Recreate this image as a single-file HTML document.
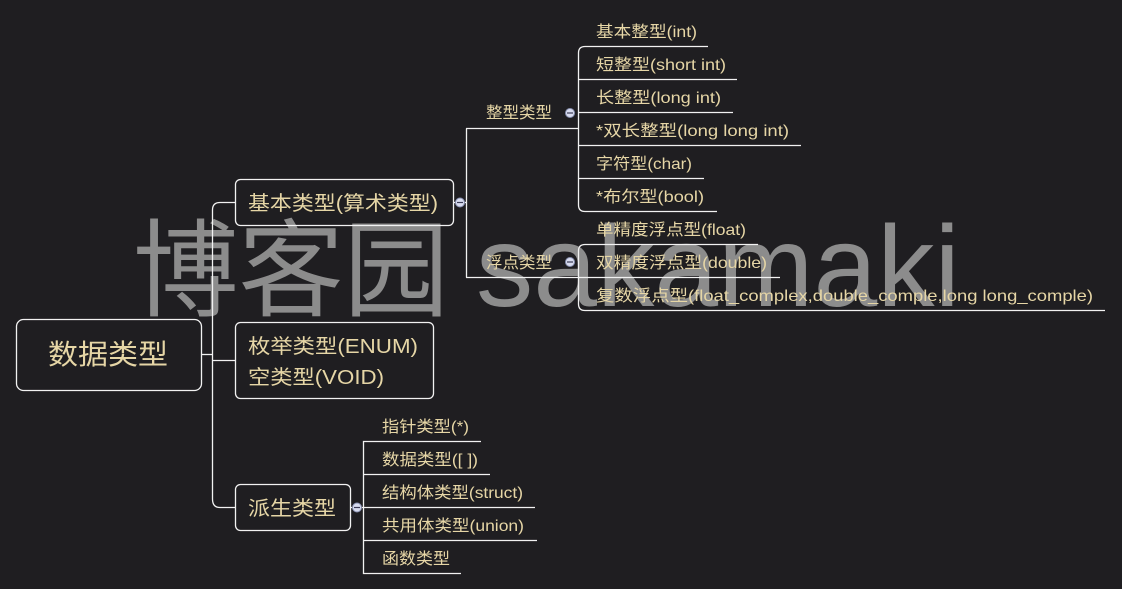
<!DOCTYPE html>
<html><head><meta charset="utf-8"><style>
html,body{margin:0;padding:0;background:#1f1e21;}
svg{display:block}
text{font-family:"Liberation Sans","Noto Sans CJK SC",sans-serif;}
</style></head><body>
<svg width="1122" height="589" viewBox="0 0 1122 589" xmlns="http://www.w3.org/2000/svg">
<rect width="1122" height="589" fill="#1f1e21"/>
<text x="133" y="308" font-size="106" fill="#8c8c8c" textLength="316" lengthAdjust="spacingAndGlyphs">博客园</text>
<text x="476" y="306" font-size="115" fill="#8c8c8c" textLength="484" lengthAdjust="spacingAndGlyphs">sakamaki</text>
<g fill="none" stroke="#f2f2f2" stroke-width="1.3">
<rect x="16.5" y="319.5" width="185" height="71" rx="7"/>
<line x1="201" y1="354.5" x2="212" y2="354.5"/>
<path d="M235 202.5 H220 Q212.5 202.5 212.5 210 V499 Q212.5 507.5 220 507.5 H235"/>
<line x1="212" y1="360.5" x2="235" y2="360.5"/>
<rect x="235.5" y="179.5" width="218" height="46" rx="5"/>
<rect x="235.5" y="322.5" width="198" height="76" rx="5"/>
<rect x="235.5" y="484.5" width="115" height="46" rx="5"/>
<line x1="453" y1="202.5" x2="466" y2="202.5"/>
<path d="M466.5 128.5 V277.5"/>
<line x1="466" y1="128.5" x2="578" y2="128.5"/>
<line x1="466" y1="277.5" x2="780" y2="277.5"/>
<path d="M708 46.5 H585 Q578.5 46.5 578.5 53 V205 Q578.5 211.5 585 211.5 H717"/>
<line x1="578" y1="79.5" x2="737" y2="79.5"/>
<line x1="578" y1="112.5" x2="733" y2="112.5"/>
<line x1="578" y1="145.5" x2="801" y2="145.5"/>
<line x1="578" y1="178.5" x2="704" y2="178.5"/>
<path d="M758 244.5 H585 Q578.5 244.5 578.5 251 V304 Q578.5 310.5 585 310.5 H1105"/>
<line x1="350" y1="507.5" x2="363" y2="507.5"/>
<path d="M481 441.5 H363.5 V573.5 H461"/>
<line x1="363" y1="474.5" x2="490" y2="474.5"/>
<line x1="363" y1="507.5" x2="535" y2="507.5"/>
<line x1="363" y1="540.5" x2="537" y2="540.5"/>
</g>
<g fill="#d8dcef" stroke="#8890b0" stroke-width="1">
<circle cx="460" cy="202.5" r="4.5"/>
<circle cx="570" cy="113" r="4.5"/>
<circle cx="570" cy="262" r="4.5"/>
<circle cx="357" cy="507.5" r="4.5"/>
</g>
<g stroke="#3a3a55" stroke-width="1.2">
<line x1="457" y1="202.5" x2="463" y2="202.5"/>
<line x1="567" y1="113" x2="573" y2="113"/>
<line x1="567" y1="262" x2="573" y2="262"/>
<line x1="354" y1="507.5" x2="360" y2="507.5"/>
</g>
<g fill="#e6d6a6" lengthAdjust="spacingAndGlyphs">
<text x="48" y="364" font-size="28" textLength="120" lengthAdjust="spacingAndGlyphs">数据类型</text>
<text x="248" y="210" font-size="20" textLength="190" lengthAdjust="spacingAndGlyphs">基本类型(算术类型)</text>
<text x="248" y="353" font-size="20" textLength="170" lengthAdjust="spacingAndGlyphs">枚举类型(ENUM)</text>
<text x="248" y="384" font-size="20" textLength="136" lengthAdjust="spacingAndGlyphs">空类型(VOID)</text>
<text x="248" y="515" font-size="20" textLength="88" lengthAdjust="spacingAndGlyphs">派生类型</text>
<g font-size="16">
<text x="486" y="118" textLength="66" lengthAdjust="spacingAndGlyphs">整型类型</text>
<text x="486" y="268" textLength="66" lengthAdjust="spacingAndGlyphs">浮点类型</text>
<text x="596" y="37" textLength="101" lengthAdjust="spacingAndGlyphs">基本整型(int)</text>
<text x="596" y="70" textLength="130" lengthAdjust="spacingAndGlyphs">短整型(short int)</text>
<text x="596" y="103" textLength="125" lengthAdjust="spacingAndGlyphs">长整型(long int)</text>
<text x="596" y="136" textLength="193" lengthAdjust="spacingAndGlyphs">*双长整型(long long int)</text>
<text x="596" y="169" textLength="96" lengthAdjust="spacingAndGlyphs">字符型(char)</text>
<text x="596" y="202" textLength="108" lengthAdjust="spacingAndGlyphs">*布尔型(bool)</text>
<text x="596" y="235" textLength="150" lengthAdjust="spacingAndGlyphs">单精度浮点型(float)</text>
<text x="596" y="268" textLength="171" lengthAdjust="spacingAndGlyphs">双精度浮点型(double)</text>
<text x="596" y="301" textLength="497" lengthAdjust="spacingAndGlyphs">复数浮点型(float_complex,double_comple,long long_comple)</text>
<text x="382" y="432" textLength="87" lengthAdjust="spacingAndGlyphs">指针类型(*)</text>
<text x="382" y="465" textLength="96" lengthAdjust="spacingAndGlyphs">数据类型([ ])</text>
<text x="382" y="498" textLength="141" lengthAdjust="spacingAndGlyphs">结构体类型(struct)</text>
<text x="382" y="531" textLength="142" lengthAdjust="spacingAndGlyphs">共用体类型(union)</text>
<text x="382" y="564" textLength="68" lengthAdjust="spacingAndGlyphs">函数类型</text>
</g>
</g>
</svg>
</body></html>
